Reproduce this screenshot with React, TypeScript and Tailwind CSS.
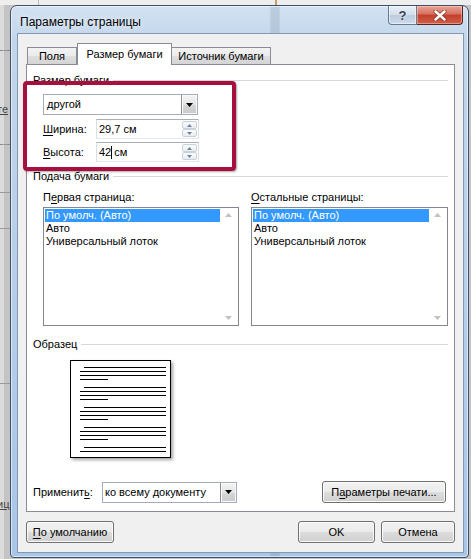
import React from "react";

function U({ children }: { children: React.ReactNode }) {
  return <span className="underline decoration-1 underline-offset-[2px]">{children}</span>;
}

function GroupLabel({ children, className }: { children: React.ReactNode; className?: string }) {
  return (
    <div className={`flex h-[13px] items-center gap-[4px] ${className ?? ""}`}>
      <span className="whitespace-nowrap">{children}</span>
      <div className="h-px flex-1 bg-[#d5d9de]" />
    </div>
  );
}

function DownTri({ color = "#000" }: { color?: string }) {
  return (
    <svg width="7" height="4" viewBox="0 0 7 4">
      <polygon points="0,0 7,0 3.5,4" fill={color} />
    </svg>
  );
}

function UpTri({ color = "#000" }: { color?: string }) {
  return (
    <svg width="7" height="4" viewBox="0 0 7 4">
      <polygon points="0,4 7,4 3.5,0" fill={color} />
    </svg>
  );
}

function DropBtn() {
  return (
    <div className="flex w-[16px] items-center justify-center border-l border-[#8c8c8c] bg-[linear-gradient(to_bottom,#f4f4f4,#e4e4e4_50%,#d6d6d6_51%,#cacaca)] shadow-[inset_0_0_0_1px_#fafafa]">
      <DownTri />
    </div>
  );
}

function SpinHalf({ up }: { up?: boolean }) {
  return (
    <div className="flex flex-1 items-center justify-center rounded-[2px] border border-[#c9d1db] bg-[linear-gradient(to_bottom,#fbfbfb,#e9ecf0)]">
      <svg width="5" height="3" viewBox="0 0 5 3">
        {up ? <polygon points="0,3 5,3 2.5,0" fill="#6e86a3" /> : <polygon points="0,0 5,0 2.5,3" fill="#6e86a3" />}
      </svg>
    </div>
  );
}

function SpinInput({ children }: { children: React.ReactNode }) {
  return (
    <div className="flex h-[20px] w-[103px] border border-[#abadb3] border-b-[#e3e9ef] border-l-[#dbdfe6] border-r-[#dbdfe6] bg-white">
      <div className="flex flex-1 items-center pl-[2px]">{children}</div>
      <div className="my-px mr-px flex w-[15px] flex-col gap-0">
        <SpinHalf up />
        <SpinHalf />
      </div>
    </div>
  );
}

function ListBox({ w }: { w: string }) {
  return (
    <div className={`flex h-[119px] ${w} border border-[#828790] bg-white p-px`}>
      <div className="flex flex-1 flex-col">
        <div className="h-[13px] bg-[#3399ff] pl-px text-white">По умолч. (Авто)</div>
        <div className="h-[13px] pl-px">Авто</div>
        <div className="h-[13px] pl-px">Универсальный лоток</div>
      </div>
      <div className="flex w-[17px] flex-col items-center justify-between py-[4px]">
        <UpTri color="#c2c2c2" />
        <DownTri color="#c2c2c2" />
      </div>
    </div>
  );
}

function Btn({ children, className }: { children: React.ReactNode; className?: string }) {
  return (
    <div
      className={`flex h-[22px] items-center justify-center rounded-[3px] border border-[#707070] bg-[linear-gradient(to_bottom,#f2f2f2,#ebebeb_50%,#dddddd_51%,#cfcfcf)] shadow-[inset_0_0_0_1px_#fbfbfb] ${className ?? ""}`}
    >
      {children}
    </div>
  );
}

function PreviewPage() {
  const groups = [4, 4, 4, 4, 2];
  return (
    <div className="flex h-[98px] w-[101px] flex-col gap-[7px] border border-black bg-white pt-[6px] shadow-[2px_2px_3px_rgba(0,0,0,0.35)]">
      {groups.map((n, gi) => (
        <div key={gi} className="flex flex-col gap-[3px]">
          {Array.from({ length: n }).map((_, li) => {
            if (li === 0) return <div key={li} className="ml-[13px] h-px w-[82px] bg-black" />;
            if (li === 3) return <div key={li} className="ml-[9px] h-px w-[28px] bg-black" />;
            return <div key={li} className="ml-[9px] h-px w-[86px] bg-black" />;
          })}
        </div>
      ))}
    </div>
  );
}

function Dialog() {
  return (
    <div className="relative flex h-[553px] w-[459px] flex-col rounded-t-[7px] rounded-b-[4px] border border-[#3d5068] bg-[linear-gradient(to_right,transparent_56.5%,rgba(110,130,150,0.22)_57%,rgba(110,130,150,0.22)_58.6%,transparent_59%),linear-gradient(to_bottom,#d3e2f2,#c2d6ec_6%,#b9d0ea_40%,#a8c6e8)] shadow-[inset_0_0_0_1px_rgba(255,255,255,0.55)]">
      {/* title bar */}
      <div className="flex h-[27px] items-start">
        <div className="flex-1 pl-[9px] pt-[9px] text-[12px] leading-[14px] text-black [text-shadow:0_0_6px_#ffffff]">
          Параметры страницы
        </div>
        <div className="mr-[5px] flex">
          <div className="flex h-[19px] w-[29px] items-center justify-center rounded-bl-[4px] border border-t-0 border-[#6b7b8c] bg-[linear-gradient(to_bottom,#e9f0f8,#d2deeb_50%,#bccde0_51%,#cddbeb)] shadow-[inset_0_0_0_1px_rgba(255,255,255,0.5)]">
            <span className="text-[13px] font-bold leading-[13px] text-[#334357] [text-shadow:0_0_2px_#ffffff]">?</span>
          </div>
          <div className="flex h-[19px] w-[46px] items-center justify-center rounded-br-[4px] border border-t-0 border-l-0 border-[#5a2520] bg-[linear-gradient(to_bottom,#e8a598,#d66f5e_45%,#c43f2c_50%,#cf5f48)] shadow-[inset_0_0_0_1px_rgba(255,220,210,0.45)]">
            <svg width="14" height="11" viewBox="0 0 14 11">
              <path d="M2.5 1.5 L11.5 9.5 M11.5 1.5 L2.5 9.5" stroke="#6a2a22" strokeWidth="4.2" strokeLinecap="round" opacity="0.6" />
              <path d="M2.5 1.5 L11.5 9.5 M11.5 1.5 L2.5 9.5" stroke="#ffffff" strokeWidth="2.4" strokeLinecap="round" />
            </svg>
          </div>
        </div>
      </div>

      {/* client area */}
      <div className="mb-[4px] ml-[6px] mr-[4px] flex flex-1 flex-col border border-[#8399b3] bg-[#f0f0f0] px-[8px] pt-[9px]">
        {/* tabs */}
        <div className="flex h-[21px] items-end pl-[1px]">
          <div className="flex h-[17px] w-[50px] items-center justify-center border border-b-0 border-[#898c95] bg-[linear-gradient(to_bottom,#f3f3f3,#ebebeb_50%,#dfdfdf_51%,#d4d4d4)]">
            Поля
          </div>
          <div className="relative z-10 -mb-px flex h-[22px] w-[95px] items-start justify-center border border-b-0 border-[#898c95] bg-white pt-[4px]">
            Размер бумаги
          </div>
          <div className="flex h-[17px] w-[99px] items-center justify-center border border-b-0 border-l-0 border-[#898c95] bg-[linear-gradient(to_bottom,#f3f3f3,#ebebeb_50%,#dfdfdf_51%,#d4d4d4)]">
            Источник бумаги
          </div>
        </div>

        {/* panel */}
        <div className="flex h-[448px] w-[429px] flex-col border border-[#898c95] bg-white px-[6px] pt-[9px]">
          <GroupLabel>Размер бумаги</GroupLabel>

          <div className="ml-[10px] mt-[7px] flex h-[21px] w-[155px] border border-[#a5acb5] bg-white">
            <div className="flex flex-1 items-center pl-[3px]">другой</div>
            <DropBtn />
          </div>

          <div className="ml-[10px] mt-[4px] flex h-[20px] items-center">
            <div className="w-[53px]">
              <U>Ш</U>ирина:
            </div>
            <SpinInput>29,7 см</SpinInput>
          </div>
          <div className="ml-[10px] mt-[3px] flex h-[20px] items-center">
            <div className="w-[53px]">
              <U>В</U>ысота:
            </div>
            <SpinInput>
              <span>42</span>
              <span className="-mr-px inline-block h-[13px] w-px bg-black" />
              <span>&nbsp;см</span>
            </SpinInput>
          </div>

          <GroupLabel className="mt-[8px]">Подача бумаги</GroupLabel>

          <div className="ml-[10px] mt-[8px] flex gap-[12px]">
            <div className="flex flex-col">
              <div className="h-[13px]">
                П<U>е</U>рвая страница:
              </div>
              <div className="mt-[3px]">
                <ListBox w="w-[196px]" />
              </div>
            </div>
            <div className="flex flex-col">
              <div className="h-[13px]">
                <U>О</U>стальные страницы:
              </div>
              <div className="mt-[3px]">
                <ListBox w="w-[197px]" />
              </div>
            </div>
          </div>

          <GroupLabel className="mt-[12px]">Образец</GroupLabel>

          <div className="ml-[37px] mt-[9px]">
            <PreviewPage />
          </div>

          <div className="mt-[23px] flex h-[22px] items-center">
            <div className="w-[69px]">
              Применит<U>ь</U>:
            </div>
            <div className="flex h-[21px] w-[135px] border border-[#a5acb5] bg-white">
              <div className="flex flex-1 items-center pl-[2px]">ко всему документу</div>
              <DropBtn />
            </div>
            <div className="flex-1" />
            <Btn className="mr-[2px] w-[124px]">
              П<U>а</U>раметры печати...
            </Btn>
          </div>
        </div>

        {/* bottom buttons */}
        <div className="mt-[9px] flex h-[22px] justify-between">
          <Btn className="w-[88px]">
            <U>П</U>о умолчанию
          </Btn>
          <div className="flex gap-[6px]">
            <Btn className="w-[77px] border-[#3c7fb1] shadow-[inset_0_0_0_1px_#b8e0f7]">OK</Btn>
            <Btn className="w-[74px]">Отмена</Btn>
          </div>
        </div>
      </div>
    </div>
  );
}

export default function App() {
  return (
    <div className="relative h-[559px] w-[471px] overflow-hidden bg-[#c4c4c4] font-['Liberation_Sans',Arial,sans-serif] text-[11px] leading-[13px] text-black">
      {/* background document bits */}
      <div className="absolute left-0 top-0 h-[5px] w-[471px] bg-[#eeeeee]" />
      <div className="absolute left-[38px] top-0 h-[5px] w-px bg-[#bdbdbd]" />
      <div className="absolute left-[275px] top-0 h-[5px] w-[2px] bg-[#c79b6a]" />
      <div className="absolute left-0 top-[5px] h-[554px] w-[4px] bg-[#dcdcdc]" />
      <div className="absolute left-0 top-[50px] h-px w-[10px] border-t border-dashed border-[#8a8a8a]" />
      <div className="absolute left-0 top-[144px] h-px w-[10px] border-t border-dashed border-[#8a8a8a]" />
      <div className="absolute left-0 top-[192px] h-px w-[10px] bg-[#9a9a9a]" />
      <div className="absolute left-0 top-[228px] h-px w-[10px] bg-[#9a9a9a]" />
      <div className="absolute left-0 top-[383px] h-px w-[10px] bg-[#9a9a9a]" />
      <div className="absolute left-[-3px] top-[103px] text-[11px] text-[#444] underline">те</div>
      <div className="absolute left-[-3px] top-[498px] text-[11px] text-[#444] underline">иц</div>

      <div className="relative pl-[10px] pt-[5px]">
        <Dialog />
      </div>

      {/* highlight annotation */}
      <div className="absolute left-[23px] top-[81px] h-[90px] w-[213px] rounded-[4px] border-[4px] border-[#a60f3e] shadow-[1px_1px_2px_rgba(0,0,0,0.35)]" />
    </div>
  );
}
